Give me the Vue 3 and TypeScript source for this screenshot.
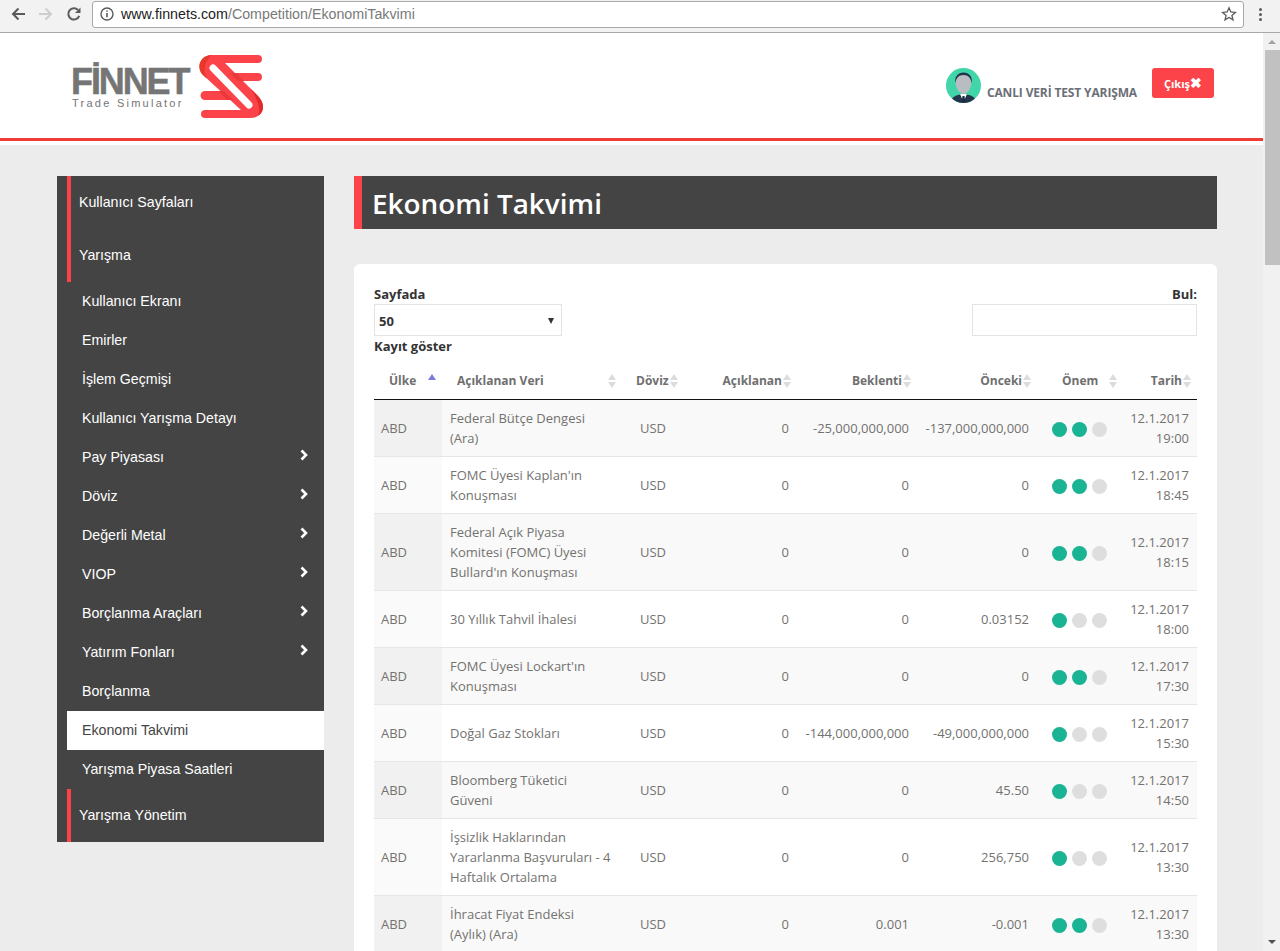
<script setup lang="ts">
interface MenuItem {
  label: string
  arrow?: boolean
  active?: boolean
}

interface CalendarRow {
  name: string[]
  actual: string
  expected: string
  previous: string
  level: number
  date: string
  time: string
}

const menuItems: MenuItem[] = [
  { label: 'Kullanıcı Ekranı' },
  { label: 'Emirler' },
  { label: 'İşlem Geçmişi' },
  { label: 'Kullanıcı Yarışma Detayı' },
  { label: 'Pay Piyasası', arrow: true },
  { label: 'Döviz', arrow: true },
  { label: 'Değerli Metal', arrow: true },
  { label: 'VIOP', arrow: true },
  { label: 'Borçlanma Araçları', arrow: true },
  { label: 'Yatırım Fonları', arrow: true },
  { label: 'Borçlanma' },
  { label: 'Ekonomi Takvimi', active: true },
  { label: 'Yarışma Piyasa Saatleri' },
]

const numericHeads = ['Açıklanan', 'Beklenti', 'Önceki']

const rows: CalendarRow[] = [
  { name: ['Federal Bütçe Dengesi', '(Ara)'], actual: '0', expected: '-25,000,000,000', previous: '-137,000,000,000', level: 2, date: '12.1.2017', time: '19:00' },
  { name: ["FOMC Üyesi Kaplan'ın", 'Konuşması'], actual: '0', expected: '0', previous: '0', level: 2, date: '12.1.2017', time: '18:45' },
  { name: ['Federal Açık Piyasa', 'Komitesi (FOMC) Üyesi', "Bullard'ın Konuşması"], actual: '0', expected: '0', previous: '0', level: 2, date: '12.1.2017', time: '18:15' },
  { name: ['30 Yıllık Tahvil İhalesi'], actual: '0', expected: '0', previous: '0.03152', level: 1, date: '12.1.2017', time: '18:00' },
  { name: ["FOMC Üyesi Lockart'ın", 'Konuşması'], actual: '0', expected: '0', previous: '0', level: 2, date: '12.1.2017', time: '17:30' },
  { name: ['Doğal Gaz Stokları'], actual: '0', expected: '-144,000,000,000', previous: '-49,000,000,000', level: 1, date: '12.1.2017', time: '15:30' },
  { name: ['Bloomberg Tüketici', 'Güveni'], actual: '0', expected: '0', previous: '45.50', level: 1, date: '12.1.2017', time: '14:50' },
  { name: ['İşsizlik Haklarından', 'Yararlanma Başvuruları - 4', 'Haftalık Ortalama'], actual: '0', expected: '0', previous: '256,750', level: 1, date: '12.1.2017', time: '13:30' },
  { name: ['İhracat Fiyat Endeksi', '(Aylık) (Ara)'], actual: '0', expected: '0.001', previous: '-0.001', level: 2, date: '12.1.2017', time: '13:30' },
]
</script>

<template>
  <div class="window">
    <div class="toolbar">
      <svg class="nav-icon" width="16" height="16" viewBox="0 0 16 16">
        <path d="M15 8H3M8.500 2.500 3 8l5.500 5.500" fill="none" stroke="#5a5a5a" stroke-width="2" />
      </svg>
      <svg class="nav-icon" width="16" height="16" viewBox="0 0 16 16">
        <path d="M1 8h12M7.500 2.500 13 8l-5.500 5.500" fill="none" stroke="#cdcdcd" stroke-width="2" />
      </svg>
      <svg class="nav-icon reload" width="16" height="16" viewBox="0 0 16 16">
        <path d="M13.200 9.800A5.600 5.600 0 1 1 12 4" fill="none" stroke="#5a5a5a" stroke-width="2" />
        <path d="M14.500 1.500v5.600H9z" fill="#5a5a5a" />
      </svg>
      <div class="omnibox">
        <svg width="14" height="14" viewBox="0 0 14 14">
          <circle cx="7" cy="7" r="6" fill="none" stroke="#5a5a5a" stroke-width="1.400" />
          <path d="M7 6v4.200M7 3.400v1.400" stroke="#5a5a5a" stroke-width="1.600" />
        </svg>
        <span class="url"><span class="url-host">www.finnets.com</span>/Competition/EkonomiTakvimi</span>
        <svg class="star" width="16" height="16" viewBox="0 0 16 16">
          <path d="m8 1.800 1.800 4.200 4.600.4-3.500 3 1.100 4.500L8 11.500l-4 2.400 1.100-4.500-3.500-3 4.600-.4z" fill="none" stroke="#5a5a5a" stroke-width="1.300" />
        </svg>
      </div>
      <div class="kebab"><i></i><i></i><i></i></div>
    </div>

    <div class="viewport">
      <div class="page">
        <header class="site-header">
          <div class="logo">
            <div class="logo-text">
              <span class="logo-name">FİNNET</span>
              <span class="logo-sub">Trade Simulator</span>
            </div>
            <svg class="logo-mark" width="64" height="64" viewBox="0 0 64 64">
              <path d="M13 0H59a4 4 0 0 1 0 8H26L58 40C62 44 64 48 64 52 64 58 59 63 51 63H6a4 4 0 0 1 0-8H42L3 19C-3 11 2 0 13 0Z" fill="#fc4349" />
              <path d="M31 18H59a4 4 0 0 1 0 8H39ZM6 36H25L34 45H6a4.500 4.500 0 0 1 0-9Z" fill="#fc4349" />
              <path d="M31 18 39 26 45 26 37 18ZM25 36 34 45 28 45 19 36Z" fill="#d8322f" opacity=".55" />
              <path d="M13 0C2 0-3 11 3 19L8 24C4 17 5 6 13 0Z" fill="#e6392a" />
              <path d="M58 40C62 44 64 48 64 52 64 56 62 59 59 61 62 55 60 47 52 34Z" fill="#e02a2a" />
              <line x1="14" y1="13" x2="50" y2="50" stroke="#fff" stroke-width="7" stroke-linecap="round" />
            </svg>
          </div>
          <div class="user">
            <svg class="avatar" width="35" height="35" viewBox="0 0 35 35">
              <defs>
                <clipPath id="avatar-clip"><circle cx="17.500" cy="17.500" r="17.500" /></clipPath>
              </defs>
              <g clip-path="url(#avatar-clip)">
                <rect width="35" height="35" fill="#41d6a9" />
                <path d="M5 35c0-6 4-8 12.500-9 8.500 1 12.500 3 12.500 9Z" fill="#22354d" />
                <path d="M14 26h7l-3.500 8Z" fill="#fff" />
                <path d="M16.500 28h2l.8 6h-3.600Z" fill="#1b2a3d" />
                <path d="M17.500 6c5 0 8 3.500 8 8.500 0 5-4 11.500-8 11.500s-8-6.500-8-11.500C9.500 9.500 12.500 6 17.500 6Z" fill="#b9bcc1" />
                <path d="M9.500 15.500C8 8.500 12 4.500 17.500 4.500S27 8.500 25.500 15.500C25 10 22.500 7 17.500 7S10 10 9.500 15.500Z" fill="#22354d" />
              </g>
            </svg>
            <span class="user-name">CANLI VERİ TEST YARIŞMA</span>
            <button class="logout" type="button">Çıkış<span class="logout-x">✖</span></button>
          </div>
        </header>

        <div class="content">
          <aside class="sidebar">
            <div class="side-group">
              <div class="side-head">Kullanıcı Sayfaları</div>
              <div class="side-head">Yarışma</div>
            </div>
            <ul class="side-menu">
              <li v-for="item in menuItems" :key="item.label" :class="['side-item', { active: item.active }]">
                {{ item.label }}
                <svg v-if="item.arrow" class="chevron" width="8" height="12" viewBox="0 0 8 12">
                  <path d="M1.500 1.500 6 6l-4.500 4.500" fill="none" stroke="#fff" stroke-width="2.600" />
                </svg>
              </li>
            </ul>
            <div class="side-group">
              <div class="side-head">Yarışma Yönetim</div>
            </div>
          </aside>

          <main class="main">
            <h1 class="title">Ekonomi Takvimi</h1>
            <section class="card">
              <div class="filters">
                <div class="length">
                  <div>Sayfada</div>
                  <div class="select">50<span class="caret"></span></div>
                  <div>Kayıt göster</div>
                </div>
                <div class="search">
                  <div>Bul:</div>
                  <div class="search-box"></div>
                </div>
              </div>

              <table class="grid">
                <colgroup>
                  <col class="col-country" />
                  <col class="col-name" />
                  <col class="col-currency" />
                  <col class="col-actual" />
                  <col class="col-num" />
                  <col class="col-num" />
                  <col class="col-level" />
                  <col class="col-date" />
                </colgroup>
                <thead>
                  <tr>
                    <th class="head-left"><span class="sort-wrap">Ülke<span class="sort-asc"></span></span></th>
                    <th class="head-left"><span class="sort-wrap">Açıklanan Veri<span class="sort sort-far"><i></i><i></i></span></span></th>
                    <th class="head-cur"><span class="sort-wrap">Döviz<span class="sort"><i></i><i></i></span></span></th>
                    <th v-for="head in numericHeads" :key="head" class="right"><span class="sort-wrap">{{ head }}<span class="sort"><i></i><i></i></span></span></th>
                    <th class="head-level"><span class="sort-wrap">Önem<span class="sort sort-near"><i></i><i></i></span></span></th>
                    <th class="right"><span class="sort-wrap">Tarih<span class="sort"><i></i><i></i></span></span></th>
                  </tr>
                </thead>
                <tbody>
                  <tr v-for="row in rows" :key="row.name[0]">
                    <td class="sorted">ABD</td>
                    <td><div v-for="line in row.name" :key="line">{{ line }}</div></td>
                    <td class="cur">USD</td>
                    <td class="right">{{ row.actual }}</td>
                    <td class="right">{{ row.expected }}</td>
                    <td class="right">{{ row.previous }}</td>
                    <td>
                      <span class="dots">
                        <i v-for="n in 3" :key="n" :class="{ on: n <= row.level }"></i>
                      </span>
                    </td>
                    <td class="right"><div>{{ row.date }}</div><div>{{ row.time }}</div></td>
                  </tr>
                </tbody>
              </table>
            </section>
          </main>
        </div>
      </div>

      <div class="scrollbar">
        <span class="scroll-up"></span>
        <div class="scroll-thumb"></div>
        <span class="scroll-down"></span>
      </div>
    </div>
  </div>
</template>

<style>
html,
body {
  margin: 0;
  overflow: hidden;
}
</style>

<style scoped>
.window {
  width: 1280px;
  height: 951px;
  display: flex;
  flex-direction: column;
  overflow: hidden;
  font-family: "Open Sans", sans-serif;
  background: #ececec;
}

.toolbar {
  height: 28px;
  flex: none;
  display: flex;
  align-items: center;
  background: #f2f2f2;
  border-bottom: 1px solid #a8a8a8;
  padding: 0 0 4px 10px;
}

.nav-icon {
  margin-right: 12px;
}

.nav-icon.reload {
  margin-right: 10px;
}

.omnibox {
  width: 1152px;
  height: 27px;
  box-sizing: border-box;
  display: flex;
  align-items: center;
  padding: 0 6px 0 7px;
  background: #fff;
  border: 1px solid #a9a9a9;
  border-radius: 3px;
}

.url {
  margin-left: 7px;
  font-family: "Liberation Sans", sans-serif;
  font-size: 14.25px;
  color: #7a7a7a;
}

.url-host {
  color: #222;
}

.star {
  margin-left: auto;
}

.kebab {
  margin-left: 15px;
  display: flex;
  flex-direction: column;
  gap: 2px;
}

.kebab i {
  width: 3px;
  height: 3px;
  border-radius: 50%;
  background: #5a5a5a;
}

.viewport {
  flex: 1;
  min-height: 0;
  display: flex;
}

.page {
  flex: 1;
  min-width: 0;
  overflow: hidden;
}

.site-header {
  height: 105px;
  display: flex;
  justify-content: space-between;
  background: #fff;
  border-bottom: 3px solid #ef3a35;
  box-shadow: 0 4px 0 #fff;
}

.logo {
  width: 191px;
  display: flex;
  justify-content: space-between;
  align-items: flex-start;
  margin: 22px 0 0 72px;
}

.logo-text {
  display: flex;
  flex-direction: column;
  margin-top: 13px;
  color: #757575;
  font-family: "Liberation Sans", sans-serif;
}

.logo-name {
  margin-left: -1px;
  font-size: 36px;
  line-height: 28px;
  font-weight: 700;
  letter-spacing: -2.1px;
  -webkit-text-stroke: 0.5px #757575;
}

.logo-sub {
  font-size: 11px;
  line-height: 14px;
  letter-spacing: 2.25px;
}

.user {
  display: flex;
  align-items: flex-start;
  margin: 35px 49px 0 0;
}

.avatar {
  flex: none;
}

.user-name {
  margin: 17px 15px 0 6px;
  font-size: 12px;
  line-height: 16px;
  font-weight: 700;
  letter-spacing: -0.14px;
  color: #6b6f76;
}

.logout {
  width: 62px;
  height: 30px;
  padding: 0;
  border: 0;
  border-radius: 3px;
  background: #fc4349;
  color: #fff;
  font-family: "Open Sans", sans-serif;
  font-size: 11px;
  font-weight: 700;
}

.logout-x {
  font-size: 14px;
  line-height: 14px;
}

.content {
  display: flex;
  align-items: flex-start;
  padding: 35px 0 0 57px;
}

.sidebar {
  width: 267px;
  flex: none;
  padding-left: 10px;
  box-sizing: border-box;
  background: #444;
  font-family: "Liberation Sans", sans-serif;
  font-size: 14.2px;
  color: #fff;
}

.side-group {
  border-left: 4px solid #fc4349;
}

.side-head {
  height: 53px;
  line-height: 52px;
  padding-left: 8px;
}

.side-menu {
  list-style: none;
  margin: 0;
  padding: 0;
}

.side-item {
  height: 39px;
  line-height: 39px;
  padding: 0 15px;
  position: relative;
}

.side-item.active {
  background: #fff;
  color: #444;
}

.chevron {
  position: absolute;
  right: 16px;
  top: 11px;
}

.main {
  width: 863px;
  margin-left: 30px;
  flex: none;
}

.title {
  height: 53px;
  box-sizing: border-box;
  margin: 0;
  padding-left: 10px;
  background: #444;
  border-left: 8px solid #fc4349;
  color: #fff;
  font-size: 27.9px;
  line-height: 54px;
  font-weight: 600;
}

.card {
  margin-top: 35px;
  padding: 20px;
  background: #fff;
  border-radius: 6px;
  font-size: 13px;
}

.filters {
  display: flex;
  justify-content: space-between;
  font-weight: 700;
  color: #333;
  line-height: 20px;
}

.length {
  width: 188px;
}

.select {
  height: 32px;
  box-sizing: border-box;
  border: 1px solid #e3e3e3;
  padding: 2px 4px 0;
  line-height: 28px;
  display: flex;
  justify-content: space-between;
  align-items: center;
  color: #333;
}

.caret {
  width: 0;
  margin-right: 3px;
  border-left: 3px solid transparent;
  border-right: 3px solid transparent;
  border-top: 6px solid #333;
}

.search {
  width: 225px;
  text-align: right;
}

.search-box {
  height: 32px;
  box-sizing: border-box;
  border: 1px solid #e3e3e3;
}

.grid {
  width: 823px;
  table-layout: fixed;
  border-collapse: separate;
  border-spacing: 0;
  margin-top: 6px;
  color: #73726f;
  line-height: 20px;
}

.col-country {
  width: 68px;
}

.col-name {
  width: 178px;
}

.col-currency {
  width: 60px;
}

.col-actual {
  width: 117px;
}

.col-num {
  width: 120px;
}

.col-level {
  width: 85px;
}

.col-date {
  width: 75px;
}

.grid th {
  height: 37px;
  padding: 0 5px 0 0;
  box-sizing: content-box;
  border-bottom: 1px solid #111;
  font-size: 12px;
  font-weight: 700;
  color: #6f6f6f;
  text-align: left;
  white-space: nowrap;
}

.grid th.head-left {
  padding-left: 15px;
}

.grid th.head-cur {
  padding-left: 16px;
}

.grid th.head-level {
  padding-left: 25px;
}

.grid th.right {
  text-align: right;
}

.sort-wrap {
  display: inline-flex;
  align-items: center;
}

.sort {
  display: inline-flex;
  flex-direction: column;
  gap: 2px;
  width: 10px;
  align-items: center;
}

.sort-far {
  margin-left: 63px;
}

.sort-near {
  margin-left: 10px;
}

.sort i:first-child {
  border-left: 4px solid transparent;
  border-right: 4px solid transparent;
  border-bottom: 6px solid #dcdcdc;
}

.sort i:last-child {
  border-left: 4px solid transparent;
  border-right: 4px solid transparent;
  border-top: 6px solid #dcdcdc;
}

.sort-asc {
  margin: 0 0 8px 12px;
  border-left: 4px solid transparent;
  border-right: 4px solid transparent;
  border-bottom: 6px solid #7b7bdc;
}

.grid td {
  padding: 8px;
  border-bottom: 1px solid #e6e6e6;
  vertical-align: middle;
}

.grid tbody tr:nth-child(odd) td {
  background: #f9f9f9;
}

.grid tbody tr:nth-child(odd) td.sorted {
  background: #f1f1f1;
}

.grid tbody tr:nth-child(even) td.sorted {
  background: #fafafa;
}

.grid td.right {
  text-align: right;
}

.grid td.cur {
  padding-left: 20px;
  padding-right: 0;
}

.grid td.sorted {
  padding-left: 7px;
}

.dots {
  display: flex;
  gap: 5px;
  margin: 2px 0 0 7px;
}

.dots i {
  width: 15px;
  height: 15px;
  border-radius: 50%;
  background: #dedede;
}

.dots i.on {
  background: #1ab394;
}

.scrollbar {
  width: 17px;
  flex: none;
  background: #f1f1f1;
  position: relative;
}

.scroll-up {
  display: block;
  width: 0;
  margin: 7px auto 0;
  border-left: 4px solid transparent;
  border-right: 4px solid transparent;
  border-bottom: 4px solid #a3a3a3;
}

.scroll-thumb {
  position: absolute;
  top: 17px;
  left: 2px;
  width: 15px;
  height: 215px;
  background: #c1c1c1;
}

.scroll-down {
  position: absolute;
  bottom: 7px;
  left: 5px;
  border-left: 4px solid transparent;
  border-right: 4px solid transparent;
  border-top: 4px solid #505050;
}
</style>
